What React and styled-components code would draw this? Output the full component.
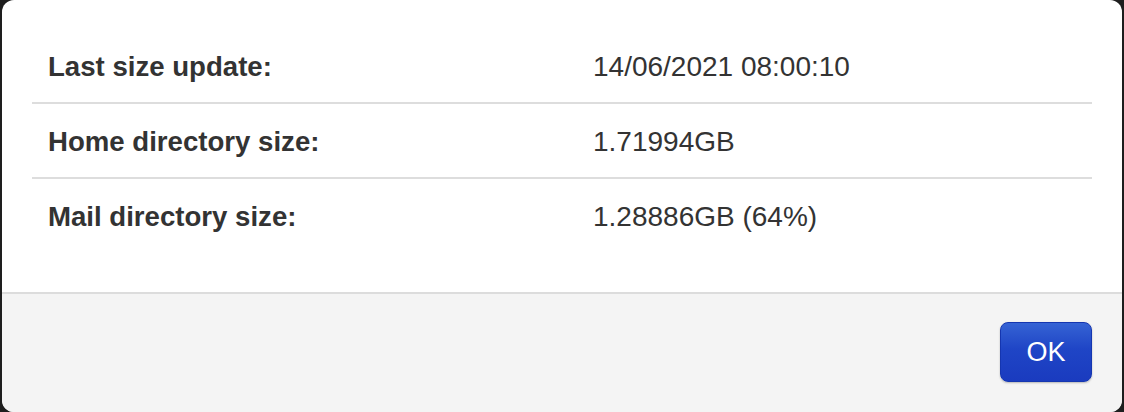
import React from "react";
import styled, { createGlobalStyle } from "styled-components";

const GlobalStyle = createGlobalStyle`
  html, body {
    margin: 0;
    padding: 0;
    background: #1e1e1e;
  }
  body {
    font-family: "Liberation Sans", Arial, Helvetica, sans-serif;
  }
`;

const Dialog = styled.div`
  margin: 0 2px;
  height: 412px;
  background: #ffffff;
  border-radius: 12px;
  overflow: hidden;
  display: flex;
  flex-direction: column;
  color: #333333;
`;

const Body = styled.div`
  padding: 29px 30px 38px;
`;

const Row = styled.div`
  display: grid;
  grid-template-columns: 545px 1fr;
  align-items: center;
  height: 75px;
  padding-top: 2px;
  box-sizing: border-box;
  border-bottom: 2px solid ${(p) => (p.last ? "transparent" : "#dddddd")};
  font-size: 28px;
`;

const Label = styled.div`
  padding-left: 16px;
  font-weight: bold;
  font-size: 27.6px;
`;

const Value = styled.div`
  padding-left: 16px;
`;

const Footer = styled.div`
  flex: 1;
  background: #f4f4f4;
  border-top: 2px solid #dcdcdc;
  display: flex;
  align-items: center;
  justify-content: flex-end;
  padding: 0 30px 2px;
`;

const OkButton = styled.button`
  width: 92px;
  height: 60px;
  border: 1px solid #1536b0;
  border-radius: 8px;
  background: linear-gradient(to bottom, #3563d4 0%, #1f45c6 45%, #1a3bbf 100%);
  box-shadow: 0 1px 2px rgba(0, 0, 0, 0.25);
  color: #ffffff;
  font-family: "Liberation Sans", Arial, sans-serif;
  font-size: 27px;
  cursor: pointer;
`;

const rows = [
  { label: "Last size update:", value: "14/06/2021 08:00:10" },
  { label: "Home directory size:", value: "1.71994GB" },
  { label: "Mail directory size:", value: "1.28886GB (64%)" },
];

export default function App() {
  return (
    <>
      <GlobalStyle />
      <Dialog>
        <Body>
          {rows.map((r, i) => (
            <Row key={r.label} last={i === rows.length - 1}>
              <Label>{r.label}</Label>
              <Value>{r.value}</Value>
            </Row>
          ))}
        </Body>
        <Footer>
          <OkButton>OK</OkButton>
        </Footer>
      </Dialog>
    </>
  );
}
